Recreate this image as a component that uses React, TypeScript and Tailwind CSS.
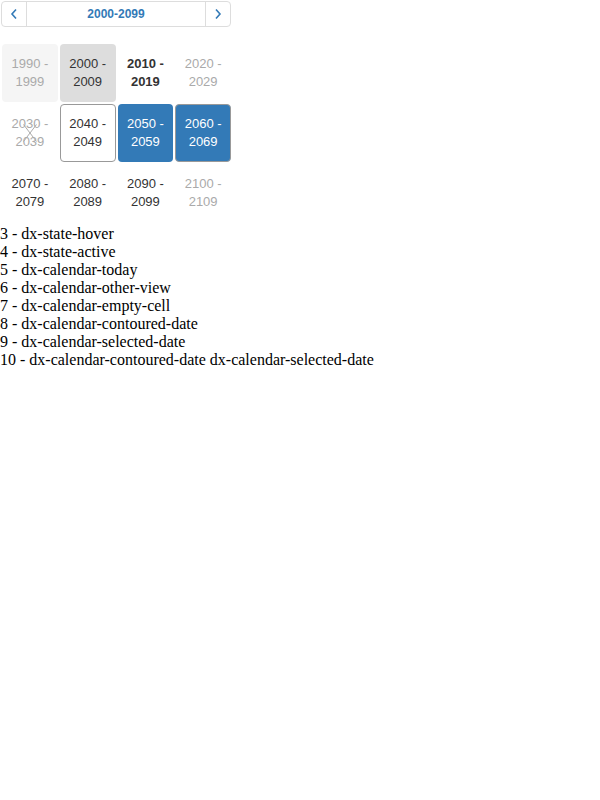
type Cell = {
  from: number
  cls: string
  empty?: boolean
}

const cells: Cell[] = [
  { from: 1990, cls: 'bg-[#f5f5f5] text-[#aaaaaa]' },
  { from: 2000, cls: 'bg-[#dddddd] text-[#333333]' },
  { from: 2010, cls: 'font-bold text-[#333333]' },
  { from: 2020, cls: 'text-[#aaaaaa]' },
  { from: 2030, cls: 'text-[#aaaaaa]', empty: true },
  { from: 2040, cls: 'border border-[#999999] text-[#333333]' },
  { from: 2050, cls: 'bg-[#337ab7] text-white' },
  { from: 2060, cls: 'border border-[#999999] bg-[#337ab7] text-white' },
  { from: 2070, cls: 'text-[#333333]' },
  { from: 2080, cls: 'text-[#333333]' },
  { from: 2090, cls: 'text-[#333333]' },
  { from: 2100, cls: 'text-[#aaaaaa]' },
]

const legend = [
  '3 - dx-state-hover',
  '4 - dx-state-active',
  '5 - dx-calendar-today',
  '6 - dx-calendar-other-view',
  '7 - dx-calendar-empty-cell',
  '8 - dx-calendar-contoured-date',
  '9 - dx-calendar-selected-date',
  '10 - dx-calendar-contoured-date dx-calendar-selected-date',
]

function Chevron({ dir }: { dir: 'left' | 'right' }) {
  return (
    <svg width="8" height="12" viewBox="0 0 8 12" fill="none">
      <path
        d={dir === 'left' ? 'M6 1.5 L2 6 L6 10.5' : 'M2 1.5 L6 6 L2 10.5'}
        stroke="#337ab7"
        strokeWidth="1.6"
      />
    </svg>
  )
}

function CalendarCell({ cell }: { cell: Cell }) {
  return (
    <div
      className={`relative flex h-[58px] items-center justify-center rounded-[4px] text-center text-[13px] leading-[18px] ${cell.cls}`}
    >
      <span className="px-2">
        {cell.from} - {cell.from + 9}
      </span>
      {cell.empty && (
        <svg
          className="absolute left-1/2 top-1/2 -translate-x-1/2 -translate-y-1/2"
          width="14"
          height="18"
          viewBox="0 0 14 18"
        >
          <path d="M0.5 0.5 L13.5 17.5 M13.5 0.5 L0.5 17.5" stroke="#aaaaaa" strokeWidth="1" />
        </svg>
      )}
    </div>
  )
}

export default function App() {
  return (
    <div className="bg-white">
      <div className="w-[233px] font-['Liberation_Sans',Arial,sans-serif]">
        <div className="ml-px mt-px flex h-[26px] w-[230px] items-stretch rounded-[4px] border border-[#dddddd]">
          <div className="flex w-[25px] items-center justify-center border-r border-[#dddddd]">
            <Chevron dir="left" />
          </div>
          <div className="flex flex-1 items-center justify-center text-[12px] font-bold text-[#337ab7]">
            2000-2099
          </div>
          <div className="flex w-[25px] items-center justify-center border-l border-[#dddddd]">
            <Chevron dir="right" />
          </div>
        </div>
        <div className="ml-[2px] mt-[17px] grid w-[229px] grid-cols-4 gap-[2px]">
          {cells.map((c) => (
            <CalendarCell key={c.from} cell={c} />
          ))}
        </div>
      </div>
      <div className="mt-[3px] font-['Liberation_Serif','Times_New_Roman',serif] text-[16px] leading-[18px] text-black">
        {legend.map((line) => (
          <div key={line}>{line}</div>
        ))}
      </div>
    </div>
  )
}
